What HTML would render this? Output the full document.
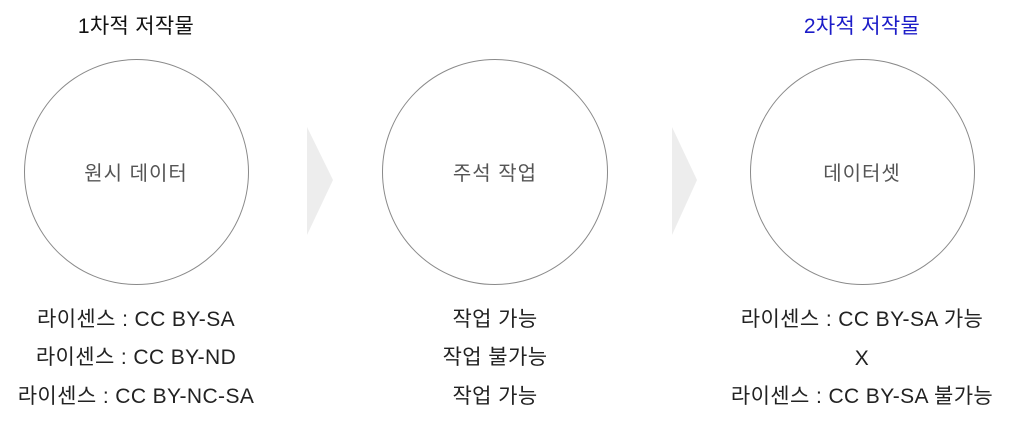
<!DOCTYPE html>
<html><head><meta charset="utf-8"><style>
body{margin:0;width:1024px;height:423px;background:#fff;position:relative;overflow:hidden;font-family:"Liberation Sans","Noto Sans CJK KR",sans-serif}
.t{position:absolute;width:400px;margin-left:-200px;text-align:center;white-space:nowrap}
.c{position:absolute;border:1.5px solid #8a8a8a;border-radius:50%;box-sizing:border-box}
.h{font-size:21px;color:#111;top:10px;letter-spacing:0.3px}
.m{font-size:20px;color:#555;top:157px;letter-spacing:1px}
.b{font-size:21px;color:#222;letter-spacing:0.4px;line-height:26px}
</style></head><body>
<div class="t h" style="left:136px">1차적 저작물</div>
<div class="t h" style="left:862px;color:#1c1cc8">2차적 저작물</div>
<div class="c" style="left:24px;top:59px;width:225px;height:226px"></div>
<div class="c" style="left:382px;top:59px;width:226px;height:226px"></div>
<div class="c" style="left:750px;top:59px;width:225px;height:226px"></div>
<svg style="position:absolute;left:0;top:0" width="1024" height="423">
<polygon points="307,127 333,180 307,235" fill="#ededed"/>
<polygon points="672,127 697,180 672,235" fill="#ededed"/>
</svg>
<div class="t m" style="left:136px">원시 데이터</div>
<div class="t m" style="left:495px">주석 작업</div>
<div class="t m" style="left:862px">데이터셋</div>
<div class="t b" style="left:136px;top:307px">라이센스 : CC BY-SA</div>
<div class="t b" style="left:136px;top:345px">라이센스 : CC BY-ND</div>
<div class="t b" style="left:136px;top:384px">라이센스 : CC BY-NC-SA</div>
<div class="t b" style="left:495px;top:307px">작업 가능</div>
<div class="t b" style="left:495px;top:345px">작업 불가능</div>
<div class="t b" style="left:495px;top:384px">작업 가능</div>
<div class="t b" style="left:862px;top:307px">라이센스 : CC BY-SA 가능</div>
<div class="t b" style="left:862px;top:346px">X</div>
<div class="t b" style="left:862px;top:384px">라이센스 : CC BY-SA 불가능</div>
</body></html>
